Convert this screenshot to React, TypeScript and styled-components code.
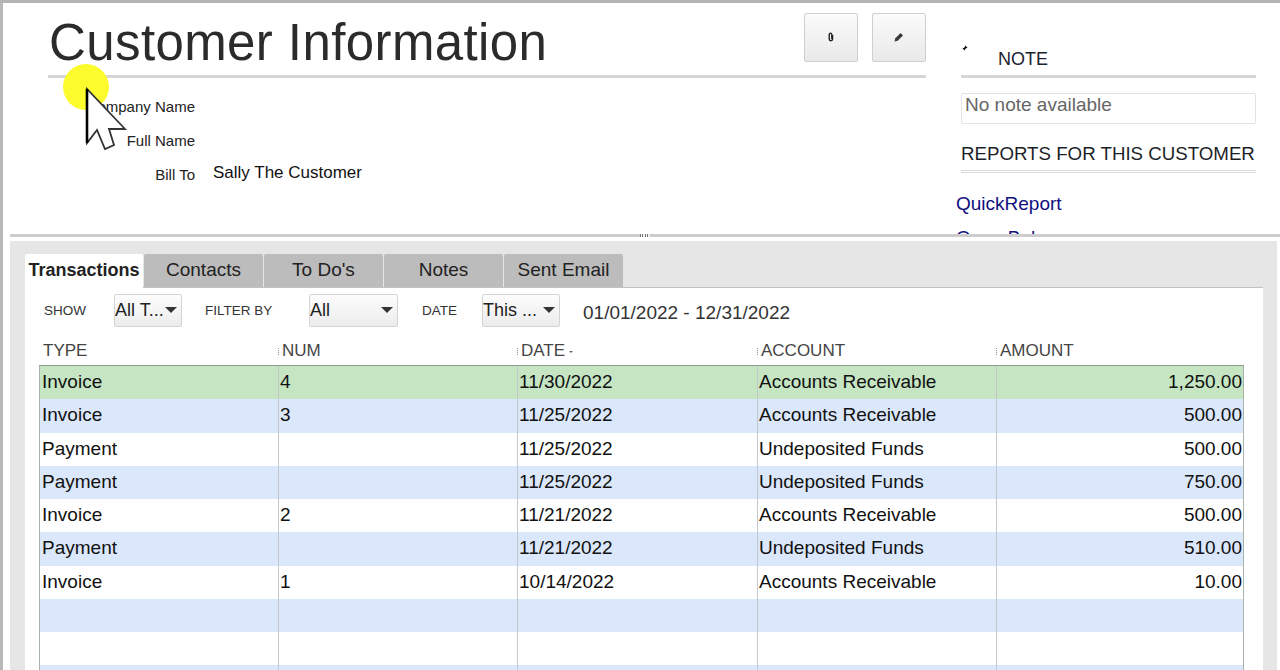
import React from "react";
import styled, { createGlobalStyle } from "styled-components";

const Global = createGlobalStyle`
  html, body { margin: 0; padding: 0; background: #fff; overflow: hidden; }
  body { font-family: "Liberation Sans", Arial, sans-serif; color: #111; }
`;

const Page = styled.div`
  position: relative;
  width: 1280px;
  height: 670px;
  overflow: hidden;
  background: #fff;
  border-top: 3px solid #b4b4b4;
  border-left: 3px solid #b8b8b8;
  box-sizing: border-box;
`;

const Top = styled.section`
  height: 231px;
  display: flex;
  overflow: hidden;
  box-sizing: border-box;
  padding-left: 45px;
`;

const Main = styled.div`
  width: 878px;
  flex: none;
`;

const TitleRow = styled.div`
  height: 72px;
  display: flex;
  justify-content: space-between;
  border-bottom: 3px solid #d6d6d6;
  box-sizing: content-box;
`;

const Title = styled.h1`
  margin: 10px 0 0 1px;
  font-size: 51px;
  line-height: 60px;
  letter-spacing: 0.4px;
  font-weight: 400;
  color: #2b2b2b;
`;

const Actions = styled.div`
  display: flex;
  gap: 14px;
  padding-top: 10px;
`;

const ActionButton = styled.button`
  width: 54px;
  height: 49px;
  padding: 0 0 2px;
  display: flex;
  align-items: center;
  justify-content: center;
  background: linear-gradient(#fbfbfb, #e9e9e9);
  border: 1px solid #cfcfcf;
  border-radius: 2px;
  color: #333;
`;

const Fields = styled.dl`
  margin: 20px 0 0;
  display: grid;
  grid-template-columns: 147px auto;
  grid-auto-rows: 34px;
  column-gap: 18px;
  font-size: 15px;
`;

const FieldLabel = styled.dt`
  text-align: right;
  line-height: 18px;
  color: #222;
`;

const FieldValue = styled.dd`
  margin: -2px 0 0;
  font-size: 17px;
  line-height: 18px;
  color: #111;
`;

const Side = styled.aside`
  width: 295px;
  margin-left: 35px;
  flex: none;
`;

const NoteHeading = styled.div`
  height: 72px;
  display: flex;
  border-bottom: 3px solid #d6d6d6;
  width: 295px;
  box-sizing: content-box;
  font-size: 18px;
  color: #1d2430;
`;

const Pin = styled.span`
  margin-top: 42px;
  width: 37px;
  flex: none;
  line-height: 0;
`;

const NoteTitle = styled.span`
  margin-top: 46px;
  line-height: 21px;
`;

const NoteBox = styled.div`
  margin-top: 15px;
  height: 29px;
  border: 1px solid #e2e2e2;
  border-radius: 2px;
  padding-left: 3px;
  font-size: 19px;
  line-height: 22px;
  color: #666;
`;

const ReportsHeading = styled.div`
  margin-top: 19px;
  height: 27px;
  line-height: 21px;
  font-size: 18.7px;
  color: #1c1f28;
  white-space: nowrap;
  border-bottom: 3px double #dcdcdc;
  box-sizing: content-box;
`;

const ReportLink = styled.a`
  display: block;
  margin: 20px 0 13px -5px;
  font-size: 19px;
  line-height: 21px;
  color: #101080;
  white-space: nowrap;
  & + & { margin-top: 0; }
`;

const Splitter = styled.div`
  height: 3px;
  margin-left: 7px;
  background: #cdcdcd;
  display: flex;
  justify-content: center;
`;

const SplitGrip = styled.i`
  width: 10px;
  height: 3px;
  background-image: repeating-linear-gradient(90deg, #777 0 1px, #f2f2f2 1px 2.5px);
`;

const Lower = styled.section`
  margin: 4px 0 0 7px;
  width: 1267px;
  height: 430px;
  box-sizing: border-box;
  background: #e6e6e6;
  padding: 13px 14px 0 15px;
`;

const Tabs = styled.div`
  display: flex;
  gap: 1px;
  height: 33px;
  border-bottom: 1px solid #c2c2c2;
  box-sizing: content-box;
`;

const Tab = styled.div<{ $active?: boolean }>`
  width: ${(p) => (p.$active ? "118px" : "119px")};
  height: ${(p) => (p.$active ? "34px" : "33px")};
  border-radius: 2px 2px 0 0;
  background: ${(p) => (p.$active ? "#fff" : "#bcbcbc")};
  font-size: ${(p) => (p.$active ? "18px" : "19px")};
  font-weight: ${(p) => (p.$active ? 700 : 400)};
  line-height: 32px;
  text-align: center;
  color: #222;
  white-space: nowrap;
  z-index: 1;
`;

const Panel = styled.div`
  background: #fff;
  height: 382px;
  width: 1238px;
  padding: 0 0 0 14px;
  box-sizing: border-box;
  overflow: hidden;
`;

const Filters = styled.div`
  display: flex;
  align-items: center;
  height: 48px;
  box-sizing: border-box;
  padding-bottom: 4px;
`;

const FilterLabel = styled.span<{ $w: number; $inset?: number }>`
  width: ${(p) => p.$w}px;
  padding-left: ${(p) => p.$inset ?? 5}px;
  box-sizing: border-box;
  flex: none;
  font-size: 13.5px;
  color: #333;
`;

const Select = styled.div<{ $w: number }>`
  width: ${(p) => p.$w}px;
  height: 33px;
  flex: none;
  box-sizing: border-box;
  padding: 0 4px 0 0;
  display: flex;
  align-items: center;
  justify-content: space-between;
  background: linear-gradient(#fdfdfd, #ececec);
  border: 1px solid #d4d4d4;
  border-radius: 2px;
  font-size: 18px;
  color: #222;
  white-space: nowrap;
`;

const Caret = styled.i`
  width: 0;
  height: 0;
  flex: none;
  border-left: 6px solid transparent;
  border-right: 6px solid transparent;
  border-top: 6px solid #333;
`;

const DateRange = styled.span`
  margin: 5px 0 0 23px;
  font-size: 19px;
  color: #333;
`;

const HeaderRow = styled.div`
  height: 29px;
  display: grid;
  grid-template-columns: 239px 239px 240px 239px 248px;
  width: 1205px;
`;

const HeaderCell = styled.div<{ $grip?: boolean }>`
  padding-left: 4px;
  position: relative;
  font-size: 17px;
  line-height: 29px;
  color: #444;
  white-space: nowrap;
  ${(p) =>
    p.$grip &&
    `&::before {
      content: "";
      position: absolute;
      left: 0;
      top: 12px;
      width: 1px;
      height: 7px;
      background-image: repeating-linear-gradient(#999 0 1px, transparent 1px 2px);
    }`}
`;

const SortMark = styled.i`
  display: inline-block;
  width: 0;
  height: 0;
  margin: 0 0 3px 4px;
  border-left: 2px solid transparent;
  border-right: 2px solid transparent;
  border-top: 2px solid #666;
`;

const Grid = styled.div`
  width: 1205px;
  border: 1px solid #a8b4a8;
  border-top-color: #8d998d;
  border-bottom: 0;
  box-sizing: border-box;
`;

const Row = styled.div<{ $bg: string }>`
  height: 33.25px;
  display: grid;
  grid-template-columns: 239px 239px 240px 239px 1fr;
  background: ${(p) => p.$bg};
`;

const Cell = styled.div<{ $right?: boolean }>`
  border-right: 1px solid #c4c8cc;
  padding: 0 ${(p) => (p.$right ? "1px" : "0")} 0 1px;
  font-size: 19px;
  line-height: 32px;
  color: #111;
  text-align: ${(p) => (p.$right ? "right" : "left")};
  white-space: nowrap;
  &:first-child { padding-left: 2px; }
  &:last-child { border-right: 0; }
`;

const Highlight = styled.div`
  position: absolute;
  left: 60px;
  top: 61px;
  width: 46px;
  height: 46px;
  border-radius: 50%;
  background: #fbfb2e;
`;

const Pointer = styled.svg`
  position: absolute;
  left: 78px;
  top: 80px;
`;

const rows = [
  ["Invoice", "4", "11/30/2022", "Accounts Receivable", "1,250.00"],
  ["Invoice", "3", "11/25/2022", "Accounts Receivable", "500.00"],
  ["Payment", "", "11/25/2022", "Undeposited Funds", "500.00"],
  ["Payment", "", "11/25/2022", "Undeposited Funds", "750.00"],
  ["Invoice", "2", "11/21/2022", "Accounts Receivable", "500.00"],
  ["Payment", "", "11/21/2022", "Undeposited Funds", "510.00"],
  ["Invoice", "1", "10/14/2022", "Accounts Receivable", "10.00"],
  ["", "", "", "", ""],
  ["", "", "", "", ""],
  ["", "", "", "", ""],
];

const rowColor = (i: number) =>
  i === 0 ? "#c5e5c3" : i % 2 === 1 ? "#dbe7fa" : "#ffffff";

export default function App() {
  return (
    <Page>
      <Global />
      <Top>
        <Main>
          <TitleRow>
            <Title>Customer Information</Title>
            <Actions>
              <ActionButton aria-label="Attach">
                <svg width="8" height="10" viewBox="0 0 8 10">
                  <path d="M5.6 3v4a1.7 1.7 0 0 1-3.4 0V2.4a1.3 1.3 0 0 1 2.6 0V7" fill="none" stroke="#222" strokeWidth="1.4" />
                </svg>
              </ActionButton>
              <ActionButton aria-label="Edit">
                <svg width="10" height="10" viewBox="0 0 10 10">
                  <path d="M0.5 9.5l.8-3.2L6.6 1 9 3.4 3.7 8.7z" fill="#3a3a3a" />
                </svg>
              </ActionButton>
            </Actions>
          </TitleRow>
          <Fields>
            <FieldLabel>Company Name</FieldLabel>
            <FieldValue />
            <FieldLabel>Full Name</FieldLabel>
            <FieldValue />
            <FieldLabel>Bill To</FieldLabel>
            <FieldValue>Sally The Customer</FieldValue>
          </Fields>
        </Main>
        <Side>
          <NoteHeading>
            <Pin>
              <svg width="7" height="7" viewBox="0 0 8 8">
                <path d="M0.3 7.7L3 5 1.6 3.6 3.8 3 5 0.6 7.4 3 5 4.2 4.4 6.4 3 5z" fill="#111" />
              </svg>
            </Pin>
            <NoteTitle>NOTE</NoteTitle>
          </NoteHeading>
          <NoteBox>No note available</NoteBox>
          <ReportsHeading>REPORTS FOR THIS CUSTOMER</ReportsHeading>
          <ReportLink>QuickReport</ReportLink>
          <ReportLink>Open Balance</ReportLink>
        </Side>
      </Top>
      <Splitter>
        <SplitGrip />
      </Splitter>
      <Lower>
        <Tabs>
          <Tab $active>Transactions</Tab>
          <Tab>Contacts</Tab>
          <Tab>To Do's</Tab>
          <Tab>Notes</Tab>
          <Tab>Sent Email</Tab>
        </Tabs>
        <Panel>
          <Filters>
            <FilterLabel $w={75}>SHOW</FilterLabel>
            <Select $w={68}>All T...<Caret /></Select>
            <FilterLabel $w={127} $inset={23}>FILTER BY</FilterLabel>
            <Select $w={89}>All<Caret /></Select>
            <FilterLabel $w={84} $inset={24}>DATE</FilterLabel>
            <Select $w={78}>This ...<Caret /></Select>
            <DateRange>01/01/2022 - 12/31/2022</DateRange>
          </Filters>
          <HeaderRow>
            <HeaderCell>TYPE</HeaderCell>
            <HeaderCell $grip>NUM</HeaderCell>
            <HeaderCell $grip>DATE<SortMark /></HeaderCell>
            <HeaderCell $grip>ACCOUNT</HeaderCell>
            <HeaderCell $grip>AMOUNT</HeaderCell>
          </HeaderRow>
          <Grid>
            {rows.map((r, i) => (
              <Row key={i} $bg={rowColor(i)}>
                {r.map((c, j) => (
                  <Cell key={j} $right={j === 4}>{c}</Cell>
                ))}
              </Row>
            ))}
          </Grid>
        </Panel>
      </Lower>
      <Highlight />
      <Pointer width="50" height="70" viewBox="0 0 50 70">
        <path d="M6 6V60L16 47 24 66 33 62 28 46H44Z" fill="#fff" stroke="#333" strokeWidth="1.8" strokeLinejoin="miter" />
        <path d="M6 6V60" fill="none" stroke="#000" strokeWidth="2.6" />
      </Pointer>
    </Page>
  );
}
